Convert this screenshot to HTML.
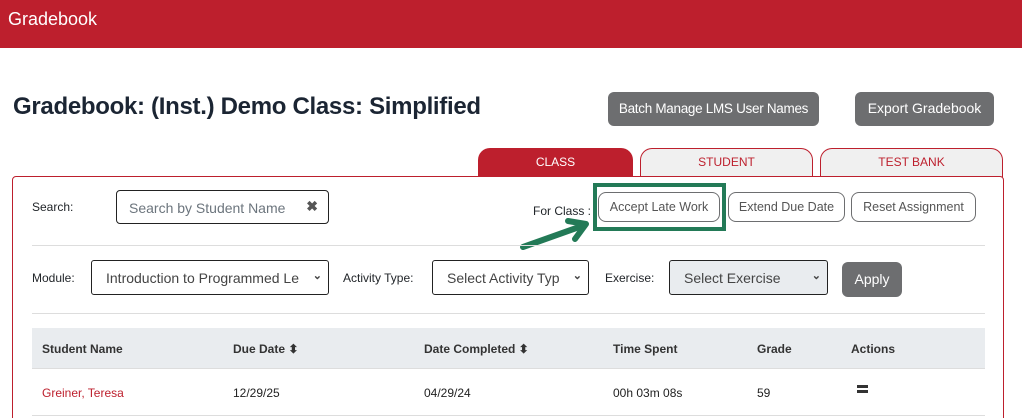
<!DOCTYPE html><html><head><style>
*{box-sizing:border-box;margin:0;padding:0}
html,body{width:1022px;height:418px;overflow:hidden}
body{background:#fff;font-family:"Liberation Sans",Arial,sans-serif;position:relative;color:#212529}
.a{position:absolute}
.hdr{left:0;top:0;width:1022px;height:48px;background:#bd1f2d;color:#fff;font-size:18px;padding:9px 0 0 8px}
.btn{background:#6d6e70;color:#fff;border-radius:6px;font-size:14px;text-align:center;line-height:33px;white-space:nowrap}
.tab{height:29px;border:1px solid #bd1f2d;border-bottom:none;border-radius:12px 12px 0 0;font-size:12px;text-align:center;line-height:27px;color:#bd1f2d;background:#f0f0f0}
.ob{border:1px solid #6d6e70;border-radius:8px;font-size:12.5px;color:#555;text-align:center;line-height:28px;background:#fff;white-space:nowrap}
.lbl{font-size:12px;color:#212529}
.sel{border:1px solid #222;border-radius:3px;height:35px;font-size:14px;color:#444;padding:9px 0 0 14px;white-space:nowrap;overflow:hidden;background:#fff}
.sel i{position:absolute;right:6px;top:8px;font-style:normal;font-size:11px;font-weight:bold}
.th{font-size:12px;font-weight:bold;color:#333;top:342px}
.td{font-size:12px;color:#222;top:386px}
</style></head><body>
<div class="a hdr">Gradebook</div>
<div class="a" style="left:13px;top:93px;font-size:24px;font-weight:bold;color:#1b2533;letter-spacing:-0.3px;white-space:nowrap">Gradebook: (Inst.) Demo Class: Simplified</div>
<div class="a btn" style="left:608px;top:92px;width:211px;height:34px;font-size:13.5px;letter-spacing:-0.3px">Batch Manage LMS User Names</div>
<div class="a btn" style="left:855px;top:92px;width:139px;height:34px">Export Gradebook</div>
<div class="a tab" style="left:478px;top:148px;width:155px;background:#bd1f2d;color:#fff">CLASS</div>
<div class="a tab" style="left:640px;top:148px;width:173px">STUDENT</div>
<div class="a tab" style="left:820px;top:148px;width:183px">TEST BANK</div>
<div class="a" style="left:12px;top:176px;width:992px;height:250px;border:1px solid #bd1f2d;border-radius:4px"></div>
<div class="a lbl" style="left:32px;top:200px">Search:</div>
<div class="a" style="left:116px;top:190px;width:213px;height:34px;border:1px solid #222;border-radius:4px;font-size:14px;color:#6c757d;padding:9px 0 0 12px;white-space:nowrap">Search by Student Name<span style="position:absolute;right:10px;top:7px;color:#555;font-weight:bold">✖</span></div>
<div class="a lbl" style="left:533px;top:204px">For Class :</div>
<div class="a ob" style="left:598px;top:192px;width:122px;height:30px">Accept Late Work</div>
<div class="a ob" style="left:728px;top:192px;width:117px;height:30px">Extend Due Date</div>
<div class="a ob" style="left:851px;top:192px;width:125px;height:30px">Reset Assignment</div>
<div class="a" style="left:593px;top:183px;width:133px;height:48px;border:4px solid #237a57"></div>
<svg class="a" style="left:510px;top:210px" width="90" height="45"><path d="M13 37 L72 16" stroke="#237a57" stroke-width="6" stroke-linecap="round"/><path d="M58 11 L76 14 L65 29" fill="none" stroke="#237a57" stroke-width="6" stroke-linecap="round" stroke-linejoin="round"/></svg>
<div class="a" style="left:32px;top:245px;width:953px;height:1px;background:#ddd"></div>
<div class="a lbl" style="left:32px;top:271px">Module:</div>
<div class="a sel" style="left:91px;top:260px;width:238px;padding-right:24px">Introduction to Programmed Le<i>⌄</i></div>
<div class="a lbl" style="left:343px;top:271px">Activity Type:</div>
<div class="a sel" style="left:432px;top:260px;width:157px">Select Activity Typ<i>⌄</i></div>
<div class="a lbl" style="left:605px;top:271px">Exercise:</div>
<div class="a sel" style="left:669px;top:260px;width:159px;background:#e9ecef">Select Exercise<i>⌄</i></div>
<div class="a btn" style="left:842px;top:262px;width:60px;height:35px;line-height:35px">Apply</div>
<div class="a" style="left:32px;top:313px;width:953px;height:1px;background:#ddd"></div>
<div class="a" style="left:32px;top:328px;width:953px;height:41px;background:#e9ecef;border-bottom:1px solid #ddd"></div>
<div class="a th" style="left:42px">Student Name</div>
<div class="a th" style="left:233px">Due Date ⬍</div>
<div class="a th" style="left:424px">Date Completed ⬍</div>
<div class="a th" style="left:613px">Time Spent</div>
<div class="a th" style="left:757px">Grade</div>
<div class="a th" style="left:851px">Actions</div>
<div class="a td" style="left:42px;color:#bd1f2d">Greiner, Teresa</div>
<div class="a td" style="left:233px">12/29/25</div>
<div class="a td" style="left:424px">04/29/24</div>
<div class="a td" style="left:613px">00h 03m 08s</div>
<div class="a td" style="left:757px">59</div>
<div class="a" style="left:857px;top:385px;width:11px;height:3px;background:#333"></div>
<div class="a" style="left:857px;top:390px;width:11px;height:3px;background:#333"></div>
<div class="a" style="left:32px;top:415px;width:953px;height:1px;background:#ddd"></div>
</body></html>
